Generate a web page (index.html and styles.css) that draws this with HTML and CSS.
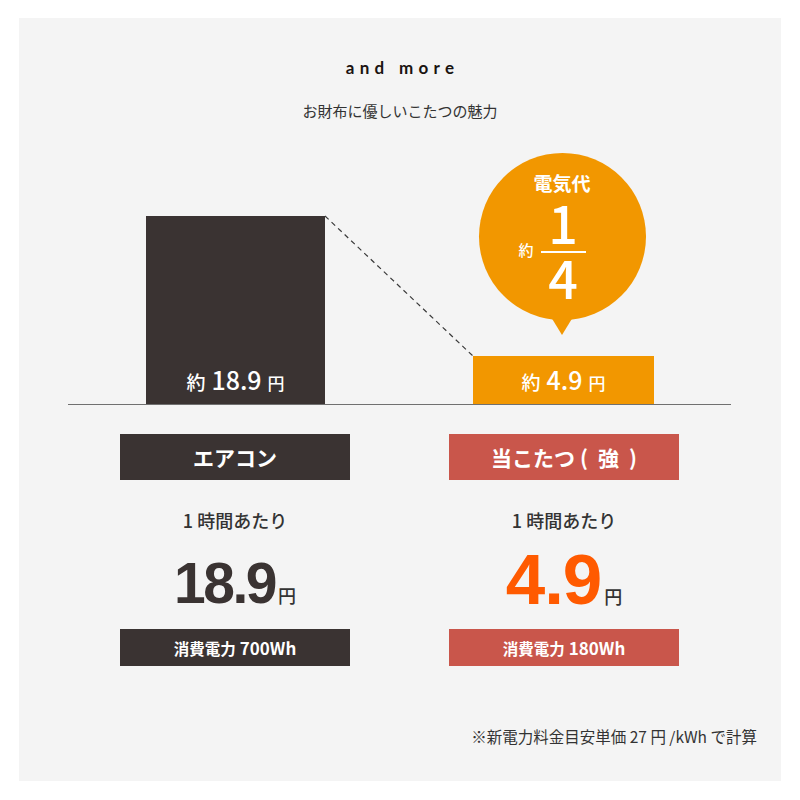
FILE: index.html
```html
<!DOCTYPE html>
<html lang="ja">
<head>
<meta charset="utf-8">
<link rel="stylesheet" href="styles.css">
</head>
<body>
<div class="panel">
  <div class="eyebrow">and more</div>
  <div class="subtitle">お財布に優しいこたつの魅力</div>

  <div class="chart">
    <svg class="guide" width="663" height="283" viewBox="0 0 663 283">
      <line x1="257" y1="95" x2="405" y2="235" stroke="#3a3a3a" stroke-width="1.2" stroke-dasharray="5 4"/>
    </svg>
    <div class="col col-left">
      <div class="bar bar-dark">
        <div class="bar-label"><span class="yaku">約</span><span class="num">18.9</span><span class="yen">円</span></div>
      </div>
    </div>
    <div class="col col-right">
      <div class="bubble">
        <div class="circle">
          <div class="bubble-title">電気代</div>
          <div class="frac-row">
            <span class="frac-yaku">約</span>
            <div class="frac">
              <div class="frac-n">1</div>
              <div class="frac-line"></div>
              <div class="frac-d">4</div>
            </div>
          </div>
        </div>
        <div class="tail"></div>
      </div>
      <div class="bar bar-orange">
        <div class="bar-label"><span class="yaku">約</span><span class="num">4.9</span><span class="yen">円</span></div>
      </div>
    </div>
  </div>

  <div class="compare">
    <div class="item">
      <div class="tag tag-dark">エアコン</div>
      <div class="per">1 時間あたり</div>
      <div class="price price-l"><span class="big">18.9</span><span class="unit">円</span></div>
      <div class="watt watt-dark">消費電力<span class="wnum">700Wh</span></div>
    </div>
    <div class="item">
      <div class="tag tag-red">当こたつ<span class="paren-o">(</span>強<span class="paren-c">)</span></div>
      <div class="per">1 時間あたり</div>
      <div class="price price-r"><span class="big big-orange">4.9</span><span class="unit">円</span></div>
      <div class="watt watt-red">消費電力<span class="wnum">180Wh</span></div>
    </div>
  </div>

  <div class="note">※新電力料金目安単価 27 円 /kWh で計算</div>
</div>
</body>
</html>
```

FILE: styles.css
```css
html, body {
  margin: 0;
  padding: 0;
  background: #ffffff;
}

body {
  font-family: "Noto Sans CJK JP", "Noto Sans", sans-serif;
  color: #333;
}

.panel {
  box-sizing: border-box;
  width: 762px;
  height: 763px;
  margin: 18px 0 0 19px;
  background: #f4f4f4;
  padding-top: 40px;
  display: flex;
  flex-direction: column;
}

.eyebrow {
  font-family: Lato, "Open Sans", sans-serif;
  font-size: 17px;
  line-height: 20px;
  letter-spacing: 5.3px;
  text-align: center;
  color: #1a1311;
  font-weight: 700;
  padding-left: 5px;
}

.subtitle {
  margin-top: 23px;
  font-size: 15px;
  line-height: 20px;
  text-align: center;
  color: #333;
}

.chart {
  position: relative;
  margin-left: 49px;
  width: 663px;
  height: 283px;
  border-bottom: 1px solid #707070;
  display: flex;
  align-items: flex-end;
}

.guide {
  position: absolute;
  left: 0;
  top: 0;
}

.col {
  display: flex;
  flex-direction: column;
  align-items: center;
  justify-content: flex-end;
}

.col-left {
  margin-left: 78px;
  width: 179px;
}

.col-right {
  margin-left: 148px;
  width: 181px;
}

.bar {
  display: flex;
  align-items: flex-end;
  justify-content: center;
  box-sizing: border-box;
  padding-bottom: 12px;
  color: #fff;
}

.bar-dark {
  width: 179px;
  height: 188px;
  background: #3a3332;
}

.bar-orange {
  width: 181px;
  height: 48px;
  background: #f29700;
}

.bar-label {
  line-height: 1;
  font-weight: 500;
  white-space: nowrap;
}

.bar-label .yaku {
  font-size: 19px;
  margin-right: 6px;
}

.bar-label .num {
  font-size: 25px;
}

.bar-label .yen {
  font-size: 17px;
  margin-left: 6px;
}

.bubble {
  display: flex;
  flex-direction: column;
  align-items: center;
  margin-bottom: 21px;
  margin-right: 3px;
}

.circle {
  width: 167px;
  height: 167px;
  border-radius: 50%;
  background: #f29700;
  color: #fff;
  box-sizing: border-box;
  padding-top: 19px;
  display: flex;
  flex-direction: column;
  align-items: center;
}

.bubble-title {
  font-size: 19px;
  line-height: 22px;
  font-weight: 700;
}

.frac-row {
  margin-top: 8px;
  display: flex;
  align-items: center;
  padding-right: 20px;
  gap: 7px;
}

.frac-yaku {
  font-size: 15px;
  font-weight: 500;
}

.frac {
  display: flex;
  flex-direction: column;
  align-items: center;
  width: 45px;
}

.frac-n,
.frac-d {
  font-size: 52px;
  line-height: 40px;
  height: 40px;
  font-weight: 500;
}

.frac-line {
  width: 45px;
  height: 2px;
  background: #fff;
  margin-top: 9px;
  margin-bottom: 4px;
}

.tail {
  width: 0;
  height: 0;
  border-left: 11px solid transparent;
  border-right: 11px solid transparent;
  border-top: 18px solid #f29700;
  margin-top: -3px;
}

.compare {
  margin-top: 29px;
  padding-left: 101px;
  display: flex;
  gap: 99px;
}

.item {
  width: 230px;
  display: flex;
  flex-direction: column;
  align-items: center;
}

.tag {
  width: 100%;
  height: 46px;
  line-height: 46px;
  text-align: center;
  color: #fff;
  font-size: 21px;
  font-weight: 700;
  white-space: nowrap;
}

.paren-o {
  margin-left: 5px;
  margin-right: 10px;
}

.paren-c {
  margin-left: 10px;
}

.tag-dark { background: #3a3332; }
.tag-red { background: #c9564b; }

.per {
  margin-top: 28px;
  font-size: 18px;
  line-height: 24px;
  font-weight: 500;
  color: #333;
}

.price {
  margin-top: 20px;
  height: 64px;
  font-family: "Liberation Sans", Arial, sans-serif;
  font-weight: 700;
  white-space: nowrap;
}

.price-l {
  font-size: 57px;
  line-height: 63px;
  color: #3a3332;
}

.price-r {
  font-size: 71px;
  line-height: 56px;
}

.price-l .big {
  letter-spacing: -2.5px;
}

.big-orange {
  color: #ff5a00;
  letter-spacing: -1px;
}

.unit {
  font-family: "Noto Sans CJK JP", sans-serif;
  font-size: 18px;
  line-height: 1;
  font-weight: 500;
  color: #333;
  margin-left: 3px;
}

.watt {
  margin-top: 13px;
  width: 100%;
  height: 37px;
  line-height: 37px;
  text-align: center;
  color: #fff;
  font-size: 15.5px;
  font-weight: 700;
}

.watt-dark { background: #3a3332; }
.watt-red { background: #c9564b; }

.wnum {
  font-size: 17px;
  margin-left: 4px;
}

.note {
  margin-top: 60px;
  padding-right: 24px;
  text-align: right;
  font-size: 15.5px;
  line-height: 20px;
  color: #333;
}
```
